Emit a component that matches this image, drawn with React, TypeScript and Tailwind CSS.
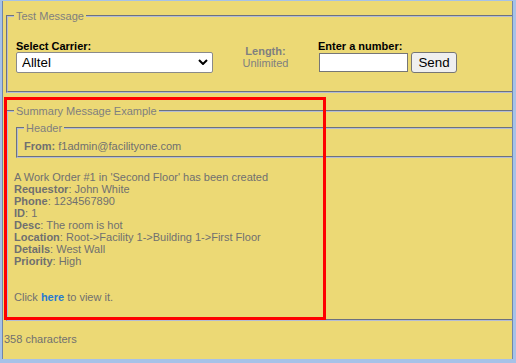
import React from "react";

const Line = ({ label, value }: { label: string; value: string }) => (
  <div className="h-[12px] leading-[12px] whitespace-nowrap">
    <span className="font-bold">{label}</span>: {value}
  </div>
);

export default function App() {
  return (
    <div
      className="w-[516px] h-[363px] border-l-2 border-t border-r-[3px] border-b-4 border-[#a6c2e8] bg-[#ecd975] text-[11px] text-[#707070]"
      style={{ fontFamily: '"Liberation Sans", Arial, sans-serif' }}
    >
      <div className="relative h-full overflow-hidden border-l border-r border-[#7185aa] pl-[1px] pt-[9px] flex flex-col">
        {/* Test Message */}
        <fieldset className="shrink-0 w-[520px] mx-[2px] border-2 [border-style:groove] border-[#b4bcd4] pl-[6px] pt-[18px] pb-[18px]">
          <legend className="px-[2px] text-[11px] leading-[12px] text-[#7f7f7f]">Test Message</legend>
          <div className="flex items-center pl-[2px]">
            <div className="flex flex-col w-[197px]">
              <div className="font-bold text-black leading-[12px]">Select Carrier:</div>
              <div className="relative">
                <select className="appearance-none w-[197px] h-[21px] bg-white border border-[#8a8a8a] rounded-[2px] pl-[5px] text-[13.33px] text-black leading-[19px] outline-none">
                  <option>Alltel</option>
                </select>
                <svg className="absolute right-[5px] top-[7px] pointer-events-none" width="10" height="6" viewBox="0 0 10 6">
                  <path d="M1 1 L5 5 L9 1" fill="none" stroke="#000" strokeWidth="2" />
                </svg>
              </div>
            </div>
            <div className="w-[105px] flex flex-col items-center text-[#808080] leading-[12px]">
              <div className="font-bold">Length:</div>
              <div>Unlimited</div>
            </div>
            <div className="flex flex-col">
              <div className="font-bold text-black leading-[12px]">Enter a number:</div>
              <div className="flex items-center ml-[1px]">
                <input className="w-[89px] h-[19px] bg-white border border-[#767676] text-[13.33px] text-black" />
                <button className="ml-[3px] w-[46px] h-[21px] bg-[#efefef] border border-[#767676] rounded-[3px] text-[13.33px] text-black leading-[19px]">
                  Send
                </button>
              </div>
            </div>
          </div>
        </fieldset>

        {/* Summary */}
        <fieldset className="shrink-0 w-[520px] mx-[2px] mt-[12px] border-2 [border-style:groove] border-[#b4bcd4] pl-[6px] pt-[5px] pb-[16px]">
          <legend className="px-[2px] text-[11px] leading-[12px] text-[#7f7f7f]">Summary Message Example</legend>
          <fieldset className="ml-[2px] border-2 [border-style:groove] border-[#b4bcd4] pl-[6px] pt-[6px] pb-[4px]">
            <legend className="px-[2px] text-[11px] leading-[12px] text-[#7f7f7f]">Header</legend>
            <div className="leading-[12px]">
              <span className="font-bold">From:</span> f1admin@facilityone.com
            </div>
          </fieldset>
          <div className="mt-[13px] flex flex-col">
            <div className="h-[12px] leading-[12px] whitespace-nowrap">A Work Order #1 in 'Second Floor' has been created</div>
            <Line label="Requestor" value="John White" />
            <Line label="Phone" value="1234567890" />
            <Line label="ID" value="1" />
            <Line label="Desc" value="The room is hot" />
            <Line label="Location" value="Root->Facility 1->Building 1->First Floor" />
            <Line label="Details" value="West Wall" />
            <Line label="Priority" value="High" />
            <div className="h-[12px]" />
            <div className="h-[12px]" />
            <div className="h-[12px] leading-[12px] whitespace-nowrap">
              Click <a className="font-bold text-[#2a7bd0]">here</a> to view it.
            </div>
          </div>
        </fieldset>

        <div className="mt-[12px] leading-[12px]">358 characters</div>

        {/* red annotation box */}
        <div className="absolute left-[1px] top-[96px] w-[322px] h-[223px] border-[3px] border-[#ff0000] pointer-events-none" />
      </div>
    </div>
  );
}
